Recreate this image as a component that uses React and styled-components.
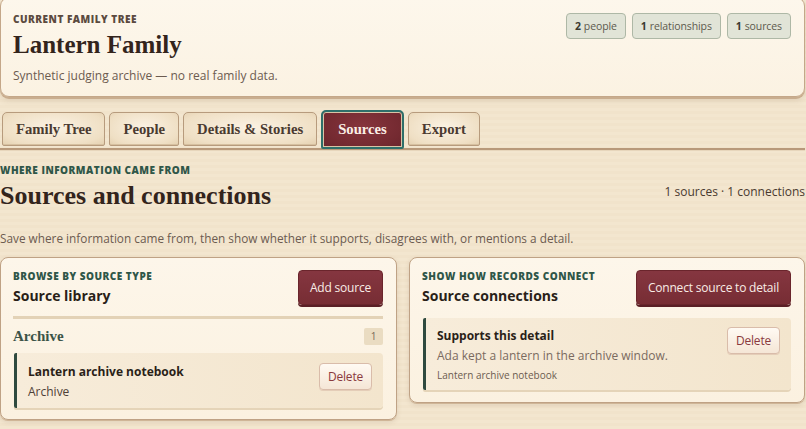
import React from "react";
import styled, { createGlobalStyle } from "styled-components";

const GlobalStyle = createGlobalStyle`
  html, body {
    margin: 0;
    padding: 0;
  }
  body {
    font-family: "Segoe UI", "Open Sans", "Noto Sans", sans-serif;
    color: #3b2b22;
    background: repeating-linear-gradient(
      180deg,
      #f3e6cf 0px,
      #f3e6cf 3px,
      #f1e3cb 3px,
      #f1e3cb 6px
    );
    min-height: 429px;
  }
`;

const Page = styled.div`
  display: flex;
  flex-direction: column;
  width: 805px;
  margin-top: -3px;
`;

const HeaderCard = styled.header`
  display: flex;
  justify-content: space-between;
  align-items: flex-start;
  padding: 15px 13px 12px 12px;
  background: linear-gradient(180deg, #fdf7ec 0%, #fbf2e2 100%);
  border: 1px solid #c4a789;
  border-radius: 9px;
  box-shadow: 0 2px 0 #c9ad8e, 0 3px 6px rgba(120, 90, 60, 0.18);
`;

const Eyebrow = styled.div`
  font-family: "Open Sans", sans-serif;
  font-size: 10px;
  font-weight: 800;
  letter-spacing: 0.5px;
  text-transform: uppercase;
  color: ${(p) => p.$tone || "#5b4a3f"};
  line-height: 13px;
`;

const FamilyName = styled.h1`
  margin: 4px 0 0;
  font-family: "Liberation Serif", serif;
  font-size: 25px;
  font-weight: 700;
  line-height: 30px;
  color: #33241c;
`;

const Subtitle = styled.p`
  margin: 8px 0 0;
  font-size: 12px;
  color: #6c5b50;
  line-height: 16px;
`;

const ChipRow = styled.div`
  display: flex;
  gap: 6px;
  margin-left: auto;
  margin-top: 0;
`;

const Chip = styled.span`
  display: inline-flex;
  align-items: center;
  height: 26px;
  padding: 0 8px;
  font-size: 10.5px;
  letter-spacing: -0.1px;
  color: #5d5a4e;
  background: #e1e4d7;
  border: 1px solid #aeb8a6;
  border-radius: 4px;
  box-sizing: border-box;

  b {
    font-weight: 700;
    color: #3b3a30;
    margin-right: 3px;
  }
`;

const TabBar = styled.nav`
  display: flex;
  align-items: flex-end;
  gap: 4px;
  margin-top: 13px;
  padding-left: 2px;
  border-bottom: 2px solid #b8997a;
  box-shadow: 0 1px 0 #e7d6bc;
`;

const Tab = styled.button`
  font-family: "Liberation Serif", serif;
  font-size: 14.7px;
  font-weight: 700;
  height: ${(p) => (p.$active ? "39px" : "34px")};
  padding: 0 ${(p) => (p.$active ? "15px" : "13px")};
  margin-bottom: ${(p) => (p.$active ? "-1px" : "2px")};
  border-radius: 5px 5px 2px 2px;
  cursor: pointer;
  color: ${(p) => (p.$active ? "#fbefe6" : "#4a3a30")};
  background: ${(p) =>
    p.$active
      ? "radial-gradient(ellipse at 50% 40%, #86343c 0%, #742a31 70%, #6a252c 100%)"
      : "radial-gradient(ellipse at 50% 45%, #fbf2e3 0%, #efdfc4 75%, #e4d0b0 100%)"};
  border: ${(p) => (p.$active ? "2px solid #2e6f6a" : "1px solid #b79b7d")};
  box-shadow: ${(p) =>
    p.$active ? "inset 0 0 0 1px #d9c3a6" : "inset 0 -1px 0 #d6c0a0"};
`;

const SectionHead = styled.section`
  display: flex;
  justify-content: space-between;
  align-items: flex-end;
  margin-top: 14px;
`;

const SectionTitle = styled.h2`
  margin: 3px 0 0;
  font-family: "Liberation Serif", serif;
  font-size: 26px;
  font-weight: 700;
  line-height: 32px;
  color: #33241c;
`;

const Counts = styled.div`
  font-size: 12px;
  line-height: 16px;
  color: #4a3a30;
  padding-bottom: 12px;
`;

const Lead = styled.p`
  margin: 18px 0 0;
  font-size: 11.8px;
  color: #6c5b50;
  line-height: 16px;
`;

const PanelGrid = styled.div`
  display: grid;
  grid-template-columns: 397px 396px;
  gap: 12px;
  align-items: start;
  margin-top: 11px;
`;

const Panel = styled.div`
  padding: 12px 13px ${(p) => p.$bottom || "11px"} 12px;
  background: linear-gradient(180deg, #fdf6ea 0%, #fbf1e0 100%);
  border: 1px solid #bfa285;
  border-radius: 8px;
  box-shadow: 0 1px 0 #cfb597, 0 2px 5px rgba(120, 90, 60, 0.16);
`;

const PanelTop = styled.div`
  display: flex;
  justify-content: space-between;
  align-items: flex-start;
`;

const PanelTitle = styled.h3`
  margin: 2.5px 0 0;
  font-size: 14px;
  font-weight: 700;
  color: #2a1f18;
  line-height: 20px;
`;

const PrimaryButton = styled.button`
  font-family: "Segoe UI", "Open Sans", sans-serif;
  font-size: 12px;
  letter-spacing: -0.2px;
  height: 35px;
  padding: 0 11px;
  color: #f8ece6;
  background: linear-gradient(180deg, #853640 0%, #772d34 100%);
  border: 1px solid #6a252c;
  border-radius: 4px;
  box-shadow: 0 2px 0 #5a1f25;
`;

const Divider = styled.hr`
  margin: 10px 0 0;
  border: none;
  height: 3px;
  background: #e3d2b6;
`;

const GroupRow = styled.div`
  display: flex;
  justify-content: space-between;
  align-items: center;
  margin-top: 9px;
`;

const GroupTitle = styled.h4`
  margin: 0;
  font-family: "Liberation Serif", serif;
  font-size: 15px;
  font-weight: 700;
  line-height: 17px;
  color: #3b5347;
`;

const CountBadge = styled.span`
  display: inline-flex;
  align-items: center;
  justify-content: center;
  width: 19px;
  height: 17px;
  font-size: 10px;
  color: #7a6a58;
  background: #eadcc2;
  border-radius: 2px;
`;

const ItemCard = styled.div`
  display: flex;
  justify-content: space-between;
  align-items: flex-start;
  margin: ${(p) => p.$margin || "8px 0 0 1px"};
  padding: ${(p) => p.$pad || "10px 11px 7px 11px"};
  background: linear-gradient(90deg, #f7ecda 0%, #f3e5cd 100%);
  border-left: 3px solid #2f4a3f;
  border-radius: 2px 4px 4px 2px;
  box-shadow: 0 2px 0 #e5d4b8;
`;

const ItemText = styled.div`
  display: flex;
  flex-direction: column;
`;

const ItemTitle = styled.div`
  font-size: 12px;
  font-weight: 700;
  color: #2a1f18;
  line-height: 18px;
`;

const ItemLine = styled.div`
  font-size: ${(p) => p.$size || "12px"};
  color: ${(p) => p.$color || "#4f4037"};
  line-height: ${(p) => p.$lh || "18px"};
  margin-top: ${(p) => p.$mt || "2px"};
`;

const GhostButton = styled.button`
  font-family: "Segoe UI", "Open Sans", sans-serif;
  font-size: 12px;
  letter-spacing: -0.2px;
  height: 27px;
  padding: 0 8px;
  color: #8a3a3e;
  background: linear-gradient(180deg, #fffaf3 0%, #f5e6d6 100%);
  border: 1px solid #d9bcaa;
  border-radius: 4px;
  box-shadow: 0 1px 0 #e4cdb8;
`;

const tabs = ["Family Tree", "People", "Details & Stories", "Sources", "Export"];

export default function App() {
  return (
    <Page>
      <GlobalStyle />
      <HeaderCard>
        <div>
          <Eyebrow>Current family tree</Eyebrow>
          <FamilyName>Lantern Family</FamilyName>
          <Subtitle>Synthetic judging archive — no real family data.</Subtitle>
        </div>
        <ChipRow>
          <Chip>
            <b>2</b>people
          </Chip>
          <Chip>
            <b>1</b>relationships
          </Chip>
          <Chip>
            <b>1</b>sources
          </Chip>
        </ChipRow>
      </HeaderCard>

      <TabBar>
        {tabs.map((t) => (
          <Tab key={t} $active={t === "Sources"}>
            {t}
          </Tab>
        ))}
      </TabBar>

      <SectionHead>
        <div>
          <Eyebrow $tone="#2f5648">Where information came from</Eyebrow>
          <SectionTitle>Sources and connections</SectionTitle>
        </div>
        <Counts>1 sources · 1 connections</Counts>
      </SectionHead>
      <Lead>
        Save where information came from, then show whether it supports,
        disagrees with, or mentions a detail.
      </Lead>

      <PanelGrid>
        <Panel>
          <PanelTop>
            <div>
              <Eyebrow $tone="#2f5648">Browse by source type</Eyebrow>
              <PanelTitle>Source library</PanelTitle>
            </div>
            <PrimaryButton>Add source</PrimaryButton>
          </PanelTop>
          <Divider />
          <GroupRow>
            <GroupTitle>Archive</GroupTitle>
            <CountBadge>1</CountBadge>
          </GroupRow>
          <ItemCard>
            <ItemText>
              <ItemTitle>Lantern archive notebook</ItemTitle>
              <ItemLine>Archive</ItemLine>
            </ItemText>
            <GhostButton>Delete</GhostButton>
          </ItemCard>
        </Panel>

        <Panel $bottom="12px">
          <PanelTop>
            <div>
              <Eyebrow $tone="#2f5648">Show how records connect</Eyebrow>
              <PanelTitle>Source connections</PanelTitle>
            </div>
            <PrimaryButton>Connect source to detail</PrimaryButton>
          </PanelTop>
          <ItemCard $margin="12px 0 0 1px" $pad="9px 11px 8px 11px">
            <ItemText>
              <ItemTitle>Supports this detail</ItemTitle>
              <ItemLine $color="#7a6a5f">
                Ada kept a lantern in the archive window.
              </ItemLine>
              <ItemLine $size="10px" $color="#6c5b50" $lh="14px" $mt="3px">
                Lantern archive notebook
              </ItemLine>
            </ItemText>
            <GhostButton>Delete</GhostButton>
          </ItemCard>
        </Panel>
      </PanelGrid>
    </Page>
  );
}
